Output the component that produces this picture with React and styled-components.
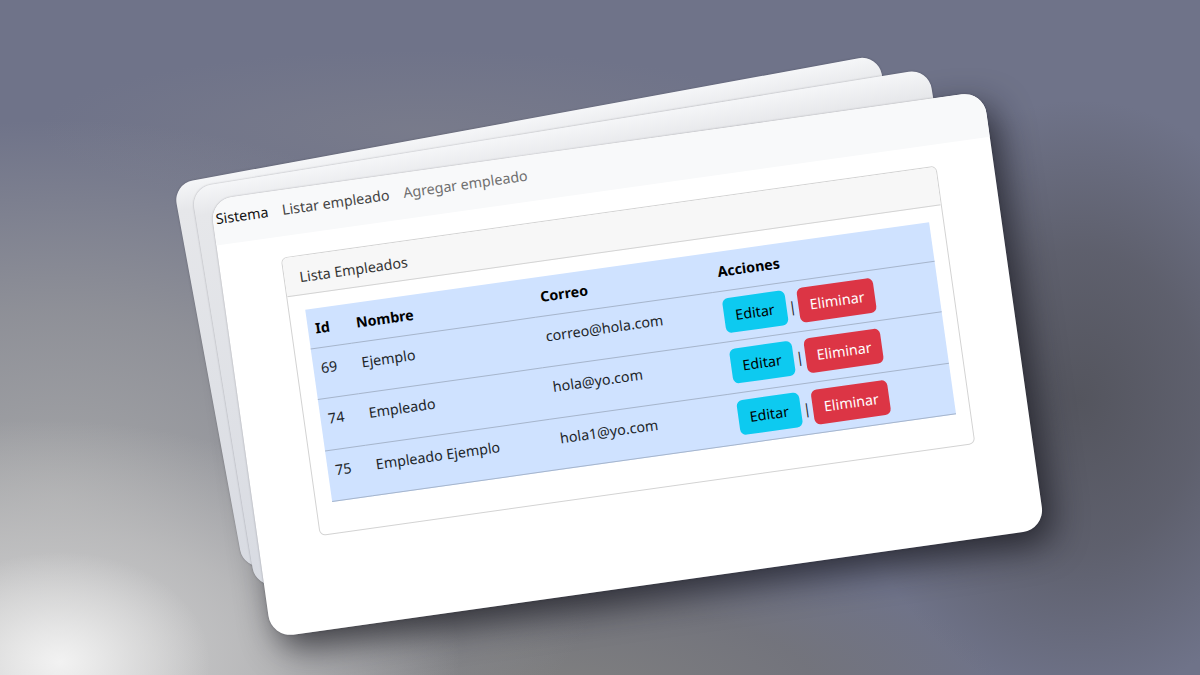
import styled, { createGlobalStyle } from "styled-components";

const GlobalStyle = createGlobalStyle`
  html, body { margin: 0; padding: 0; height: 100%; overflow: hidden; }
  body { font-family: "Noto Sans", "Open Sans", sans-serif; color: #212529; }
`;

const Scene = styled.div`
  position: relative;
  width: 1200px;
  height: 675px;
  overflow: hidden;
  background-color: #6f7389;
`;

const Backdrop = styled.div`
  position: absolute;
  inset: 0;
  background:
    radial-gradient(ellipse 150px 110px at 60px 662px, rgba(242,242,242,1) 0%, rgba(228,228,228,.7) 50%, rgba(212,212,212,0) 100%),
    radial-gradient(ellipse 420px 240px at 40px 660px, rgba(212,212,212,1) 0%, rgba(190,190,191,.85) 55%, rgba(160,160,164,0) 100%),
    radial-gradient(ellipse 560px 380px at 60px 500px, rgba(165,166,168,1) 0%, rgba(150,151,155,.8) 50%, rgba(125,127,140,0) 100%),
    radial-gradient(ellipse 460px 150px at 540px 690px, rgba(128,128,128,1) 0%, rgba(116,116,120,.75) 60%, rgba(111,115,137,0) 100%),
    radial-gradient(ellipse 240px 300px at 1080px 400px, rgba(84,85,94,1) 0%, rgba(90,91,102,.8) 50%, rgba(111,115,137,0) 100%),
    radial-gradient(ellipse 380px 80px at 420px 130px, rgba(124,126,140,.7) 0%, rgba(111,115,137,0) 100%),
    #6f7389;
`;

const BackSheet = styled.div`
  position: absolute;
  left: ${(p) => p.$left}px;
  top: ${(p) => p.$top}px;
  width: ${(p) => p.$width}px;
  height: ${(p) => p.$height}px;
  border-radius: 20px;
  transform: rotate(${(p) => p.$angle}deg);
  transform-origin: 0 0;
  background: linear-gradient(180deg, #f5f6f8 0%, #e6e7ea 7%, #d8dbe2 100%);
  box-shadow: 0 0 2px rgba(40, 40, 50, 0.4);
`;

const Sheet = styled.div`
  position: absolute;
  left: 210px;
  top: 200px;
  width: 781px;
  height: 442px;
  border-radius: 22px;
  overflow: hidden;
  background: #fff;
  transform: rotate(-8deg);
  transform-origin: 0 0;
  box-shadow: 0 0 2px rgba(40, 40, 50, 0.4);
`;

const SheetShadow = styled.div`
  position: absolute;
  left: 210px;
  top: 200px;
  width: 781px;
  height: 442px;
  border-radius: 22px;
  transform: rotate(-8deg);
  transform-origin: 0 0;
  box-shadow: 8px 14px 34px rgba(20, 20, 26, 0.72);
`;

const Navbar = styled.nav`
  display: flex;
  align-items: center;
  gap: 14px;
  height: 45.5px;
  padding: 0 0 6px 3px;
  box-sizing: border-box;
  background: #f8f9fa;
  font-size: 14.3px;
`;

const Brand = styled.span`
  color: #111;
`;

const NavLink = styled.span`
  color: ${(p) => (p.$muted ? "#6f6f6f" : "#444")};
`;

const Card = styled.section`
  margin: 21px 0 0 62px;
  width: 662px;
  height: 281px;
  box-sizing: border-box;
  border: 1px solid #d3d3d3;
  border-radius: 6px;
  overflow: hidden;
`;

const CardHeader = styled.header`
  height: 39px;
  padding: 3px 15px 0;
  display: flex;
  align-items: center;
  box-sizing: border-box;
  background: #f7f7f7;
  border-bottom: 1px solid #d3d3d3;
  font-size: 14.3px;
  color: #333;
`;

const CardBody = styled.div`
  padding: 15.5px 15px 15px 15.5px;
`;

const Table = styled.table`
  width: 630px;
  table-layout: fixed;
  border-collapse: collapse;
  background: #cfe2ff;
  font-size: 14.3px;
  color: #212529;
`;

const HeadCell = styled.th`
  width: ${(p) => p.$width}px;
  height: 39px;
  padding: 0 8px;
  box-sizing: border-box;
  text-align: left;
  font-weight: 700;
  color: #000;
  border-bottom: 1px solid #a6b5cc;
`;

const Cell = styled.td`
  height: 51.5px;
  padding: 8px;
  box-sizing: border-box;
  vertical-align: top;
  line-height: 23px;
  border-bottom: 1px solid #a6b5cc;
`;

const Actions = styled.div`
  display: flex;
  align-items: center;
  gap: 2.5px;
  margin-top: -1px;
`;

const Button = styled.span`
  display: inline-flex;
  align-items: center;
  justify-content: center;
  height: 35px;
  width: ${(p) => p.$width}px;
  border-radius: 6px;
  background: ${(p) => p.$bg};
  color: ${(p) => p.$fg};
`;

const rows = [
  { id: 69, name: "Ejemplo", mail: "correo@hola.com" },
  { id: 74, name: "Empleado", mail: "hola@yo.com" },
  { id: 75, name: "Empleado Ejemplo", mail: "hola1@yo.com" },
];

export default function App() {
  return (
    <Scene>
      <GlobalStyle />
      <Backdrop />
      <SheetShadow />
      <BackSheet $left={173} $top={184} $width={717} $height={392} $angle={-10.4} />
      <BackSheet $left={191} $top={188} $width={747} $height={405} $angle={-9.2} />
      <Sheet>
        <Navbar>
          <Brand>Sistema</Brand>
          <NavLink>Listar empleado</NavLink>
          <NavLink $muted>Agregar empleado</NavLink>
        </Navbar>
        <Card>
          <CardHeader>Lista Empleados</CardHeader>
          <CardBody>
            <Table>
              <thead>
                <tr>
                  <HeadCell $width={41}>Id</HeadCell>
                  <HeadCell $width={186}>Nombre</HeadCell>
                  <HeadCell $width={179}>Correo</HeadCell>
                  <HeadCell $width={224}>Acciones</HeadCell>
                </tr>
              </thead>
              <tbody>
                {rows.map((r) => (
                  <tr key={r.id}>
                    <Cell>{r.id}</Cell>
                    <Cell>{r.name}</Cell>
                    <Cell>{r.mail}</Cell>
                    <Cell>
                      <Actions>
                        <Button $width={63} $bg="#0dcaf0" $fg="#000">Editar</Button>
                        <span>|</span>
                        <Button $width={77} $bg="#dc3545" $fg="#fff">Eliminar</Button>
                      </Actions>
                    </Cell>
                  </tr>
                ))}
              </tbody>
            </Table>
          </CardBody>
        </Card>
      </Sheet>
    </Scene>
  );
}
